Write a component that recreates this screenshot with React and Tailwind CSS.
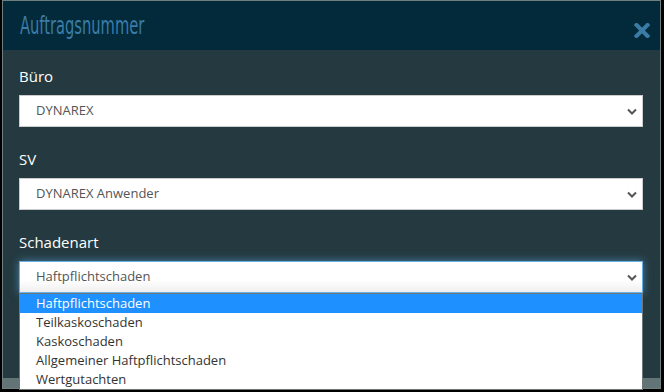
import React from "react";

const Chevron = () => (
  <svg width="10" height="7" viewBox="0 0 10 7" className="absolute right-[6px] top-[13px]">
    <path d="M1 1.5 L5 5.5 L9 1.5" fill="none" stroke="#555" strokeWidth="2" />
  </svg>
);

function Field({ label, value, focused, children }) {
  return (
    <div className="mb-[22px]">
      <div className="text-[15px] leading-[21px] text-white mb-2">{label}</div>
      <div className="relative">
        <div
          className={
            focused
              ? "h-8 border border-[#66afe9] bg-gradient-to-b from-white from-60% to-[#efefef] shadow-[0_0_8px_rgba(102,175,233,0.6)] flex items-center pl-4 text-[13px] text-[#555]"
              : "h-8 border border-[#ccc] bg-white flex items-center pl-4 text-[13px] text-[#555]"
          }
        >
          {value}
        </div>
        <Chevron />
        {children}
      </div>
    </div>
  );
}

export default function App() {
  const options = [
    "Haftpflichtschaden",
    "Teilkaskoschaden",
    "Kaskoschaden",
    "Allgemeiner Haftpflichtschaden",
    "Wertgutachten",
  ];

  return (
    <div
      className="w-[664px] h-[392px] bg-black pl-[2px] overflow-hidden"
      style={{ fontFamily: '"Open Sans", sans-serif' }}
    >
      <div className="w-[659px] h-[389px] border border-[#6f7f80] flex flex-col">
        {/* Header */}
        <div className="h-[49px] bg-[#032a3a] flex items-center justify-between pl-[17px] pr-[10px] shrink-0">
          <span
            className="text-[#3b7ca6] text-[24px] origin-left scale-x-[0.68] inline-block"
            style={{ fontFamily: '"DejaVu Sans Condensed", "DejaVu Sans", sans-serif' }}
          >
            Auftragsnummer
          </span>
          <svg width="16" height="15" viewBox="0 0 16 15" className="mt-[9px]">
            <path d="M2.5 2 L13.5 13 M13.5 2 L2.5 13" stroke="#3b7ca6" strokeWidth="4" strokeLinecap="square" />
          </svg>
        </div>

        {/* Body */}
        <div className="flex-1 bg-[#243a40] pt-4 pl-4 pr-[17px]">
          <Field label="Büro" value="DYNAREX" />
          <Field label="SV" value="DYNAREX Anwender" />
          <Field label="Schadenart" value="Haftpflichtschaden" focused>
            <div className="absolute left-0 right-0 top-[32px] bg-white border border-[#6f7677] z-10">
              {options.map((o, i) => (
                <div
                  key={o}
                  className={
                    i === 0
                      ? "h-[19px] leading-[19px] pl-4 text-[13px] bg-[#1e90ff] text-white"
                      : "h-[19px] leading-[19px] pl-4 text-[13px] text-[#333]"
                  }
                >
                  {o}
                </div>
              ))}
            </div>
          </Field>
        </div>

        {/* Footer */}
        <div className="h-[10px] bg-[#627476] shrink-0" />
      </div>
    </div>
  );
}
